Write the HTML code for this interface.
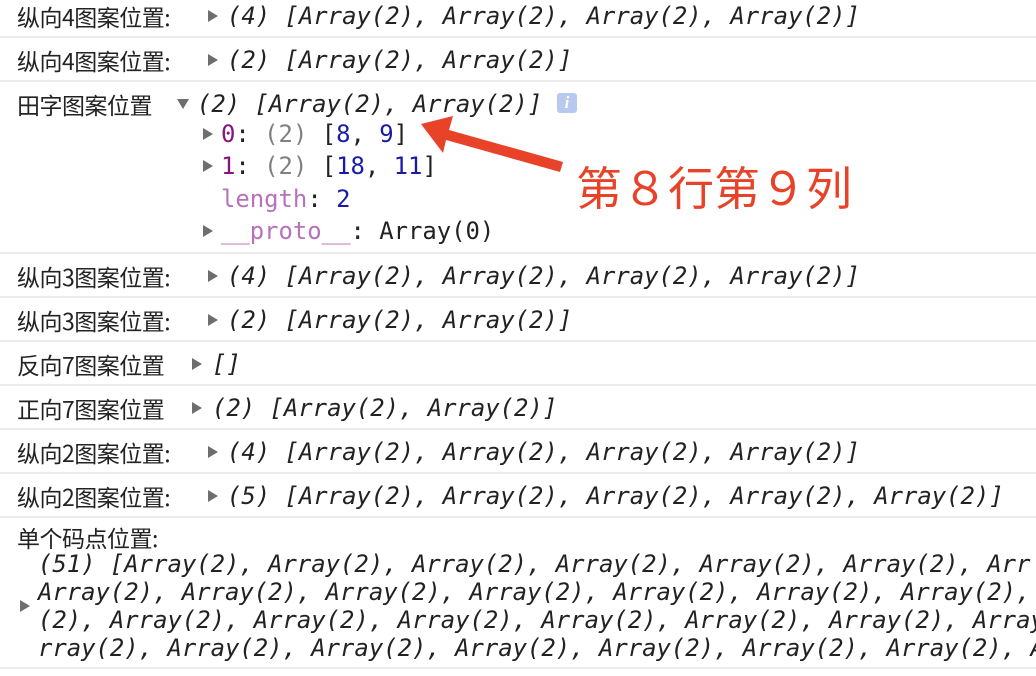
<!DOCTYPE html>
<html><head><meta charset="utf-8"><style>
body{margin:0;width:1036px;height:676px;background:#fff;overflow:hidden;position:relative;font-family:"Liberation Sans","Noto Sans CJK SC",sans-serif}
.row{position:absolute;left:0;width:1036px;border-bottom:2px solid #ececec;}
.lab{position:absolute;left:17px;font-size:23px;line-height:30px;color:#222;white-space:nowrap;font-family:"Noto Sans CJK SC",sans-serif;letter-spacing:-0.5px}
.m{position:absolute;font-family:"DejaVu Sans Mono","Liberation Mono",monospace;font-size:23.9px;color:#222;white-space:pre}
.i{font-style:italic}
.tri{position:absolute;width:0;height:0;border-top:6px solid transparent;border-bottom:6px solid transparent;border-left:10px solid #6e6e6e}
.tdn{position:absolute;width:0;height:0;border-left:6px solid transparent;border-right:6px solid transparent;border-top:10px solid #6e6e6e}
.p{color:#881280}.g{color:#808080}.b{color:#1a1aa6}.lp{color:#b871bb}
</style></head><body>
<div class="row" style="top:0;height:36px"></div>
<div class="lab" style="top:1px">纵向4图案位置:</div><div class="tri" style="left:208px;top:10px"></div><div class="m i" style="left:227px;top:2px">(4) [Array(2), Array(2), Array(2), Array(2)]</div>

<div class="row" style="top:38px;height:42px"></div>
<div class="lab" style="top:45px">纵向4图案位置:</div><div class="tri" style="left:208px;top:54px"></div><div class="m i" style="left:227px;top:46px">(2) [Array(2), Array(2)]</div>

<div class="row" style="top:82px;height:170px"></div>
<div class="lab" style="top:89px">田字图案位置</div><div class="tdn" style="left:177px;top:99px"></div><div class="m i" style="left:197px;top:90px">(2) [Array(2), Array(2)]</div>
<div style="position:absolute;left:557px;top:93px;width:20px;height:20px;background:#b8c8f0;border-radius:3px;color:#fff;font:italic bold 17px 'Liberation Serif',serif;text-align:center;line-height:20px">i</div>
<div class="tri" style="left:203px;top:128px"></div><div class="m" style="left:221px;top:120px"><span class="p">0</span>: <span class="g">(2)</span> [<span class="b">8</span>, <span class="b">9</span>]</div>
<div class="tri" style="left:203px;top:160px"></div><div class="m" style="left:221px;top:152px"><span class="p">1</span>: <span class="g">(2)</span> [<span class="b">18</span>, <span class="b">11</span>]</div>
<div class="m" style="left:221px;top:185px"><span class="lp">length</span>: <span class="b">2</span></div>
<div class="tri" style="left:203px;top:225px"></div><div class="m" style="left:221px;top:217px"><span class="lp">__proto__</span>: Array(0)</div>
<svg style="position:absolute;left:0;top:0" width="1036" height="676"><polygon points="421,124 453,116 449,130 563,162 560,172 446,140 443,153" fill="#e84328"/></svg>
<div style="position:absolute;left:576px;top:158px;font-size:46px;color:#e84328;font-family:'Noto Sans CJK SC',sans-serif;line-height:56px;white-space:nowrap">第８行第９列</div>

<div class="row" style="top:254px;height:42px"></div>
<div class="lab" style="top:261px">纵向3图案位置:</div><div class="tri" style="left:208px;top:270px"></div><div class="m i" style="left:227px;top:262px">(4) [Array(2), Array(2), Array(2), Array(2)]</div>

<div class="row" style="top:298px;height:42px"></div>
<div class="lab" style="top:305px">纵向3图案位置:</div><div class="tri" style="left:208px;top:314px"></div><div class="m i" style="left:227px;top:306px">(2) [Array(2), Array(2)]</div>

<div class="row" style="top:342px;height:42px"></div>
<div class="lab" style="top:349px">反向7图案位置</div><div class="tri" style="left:192px;top:358px"></div><div class="m i" style="left:212px;top:350px">[]</div>

<div class="row" style="top:386px;height:42px"></div>
<div class="lab" style="top:393px">正向7图案位置</div><div class="tri" style="left:192px;top:402px"></div><div class="m i" style="left:212px;top:394px">(2) [Array(2), Array(2)]</div>

<div class="row" style="top:430px;height:42px"></div>
<div class="lab" style="top:437px">纵向2图案位置:</div><div class="tri" style="left:208px;top:446px"></div><div class="m i" style="left:227px;top:438px">(4) [Array(2), Array(2), Array(2), Array(2)]</div>

<div class="row" style="top:474px;height:42px"></div>
<div class="lab" style="top:481px">纵向2图案位置:</div><div class="tri" style="left:208px;top:490px"></div><div class="m i" style="left:227px;top:482px">(5) [Array(2), Array(2), Array(2), Array(2), Array(2)]</div>

<div class="row" style="top:518px;height:149px"></div>
<div class="lab" style="top:522px">单个码点位置:</div>
<div class="tri" style="left:20px;top:600px"></div>
<div class="m i" style="left:38px;top:550px;line-height:28px">(51) [Array(2), Array(2), Array(2), Array(2), Array(2), Array(2), Arr
Array(2), Array(2), Array(2), Array(2), Array(2), Array(2), Array(2), A
(2), Array(2), Array(2), Array(2), Array(2), Array(2), Array(2), Array(2
rray(2), Array(2), Array(2), Array(2), Array(2), Array(2), Array(2), Ar</div>
</body></html>
